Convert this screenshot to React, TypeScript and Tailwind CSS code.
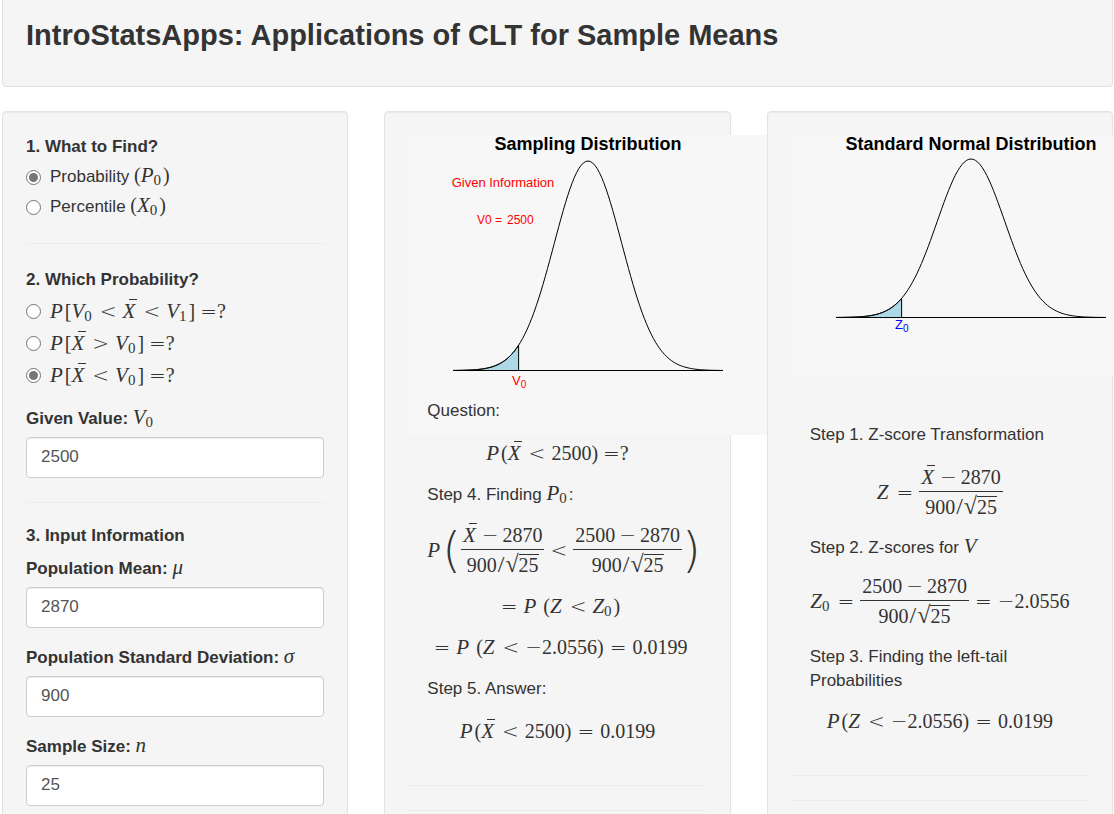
import { useState, type ReactNode } from "react";

/* ---------- Math typesetting helpers ---------- */

function M({ children }: { children: ReactNode }) {
  return (
    <span className="whitespace-nowrap font-['Liberation_Serif',serif] text-[20px] font-normal leading-7">
      {children}
    </span>
  );
}

/* Math inside a line of ordinary text; keeps the line's own height. */
function Inline({ children }: { children: ReactNode }) {
  return (
    <span className="whitespace-nowrap font-['Liberation_Serif',serif] text-[20px] font-normal leading-none">
      {children}
    </span>
  );
}

function V({ name, sub, bar }: { name: string; sub?: string; bar?: boolean }) {
  return (
    <>
      <span
        className={`relative inline-block text-[21px] italic leading-none ${sub ? "" : "mr-[2px]"}`}
      >
        {name}
        {bar && <span className="absolute left-[6px] top-[-2px] w-2 border-t border-[#333]" />}
      </span>
      {sub && <sub className="bottom-[-3px] mr-[2px] text-[15px] leading-none">{sub}</sub>}
    </>
  );
}

function Sign({ children }: { children: ReactNode }) {
  return (
    <span className="font-['DejaVu_Sans',sans-serif] text-[20px] font-extralight leading-none">
      {children}
    </span>
  );
}

function Op({ children }: { children: ReactNode }) {
  return (
    <span className="mx-[6px]">
      <Sign>{children}</Sign>
    </span>
  );
}

function Minus() {
  return (
    <span className="mx-1">
      <Sign>−</Sign>
    </span>
  );
}

function Equation({ children }: { children: ReactNode }) {
  return <div className="flex items-center justify-center text-center">{children}</div>;
}

function Frac({ top, bottom }: { top: ReactNode; bottom: ReactNode }) {
  return (
    <span className="inline-flex flex-col items-center">
      <span className="px-[2px]">
        <M>{top}</M>
      </span>
      <span className="flex w-full justify-center border-t border-[#333] pt-px">
        <M>{bottom}</M>
      </span>
    </span>
  );
}

function StandardError({ sd, n }: { sd: string; n: string }) {
  return (
    <>
      {sd}
      <span className="mx-px text-[24px] leading-none">/</span>
      <span className="text-[24px] leading-none">√</span>
      <span className="inline-block border-t border-[#333] leading-[21px]">{n}</span>
    </>
  );
}

function Paren({ children }: { children: ReactNode }) {
  return (
    <span className="font-['DejaVu_Sans',sans-serif] text-[48px] font-extralight leading-[52px]">
      {children}
    </span>
  );
}

/* ---------- Plots ---------- */

const CENTER = 180;
const SD = 33.75;

function curve(base: number, peak: number, from: number, to: number) {
  const pts: string[] = [];
  const steps = 120;
  for (let i = 0; i <= steps; i++) {
    const z = from + ((to - from) * i) / steps;
    const y = base - (base - peak) * Math.exp((-z * z) / 2);
    pts.push(`${(CENTER + z * SD).toFixed(2)},${y.toFixed(2)}`);
  }
  return pts.join(" ");
}

function BellPlot({
  title,
  height,
  base,
  peak,
  z,
  children,
}: {
  title: string;
  height: number;
  base: number;
  peak: number;
  z: number;
  children: ReactNode;
}) {
  const cut = CENTER + z * SD;
  return (
    <svg
      width="360"
      height={height}
      viewBox={`0 0 360 ${height}`}
      role="img"
      aria-label={title}
      className="block max-w-none bg-[#f7f7f7] font-['Liberation_Sans',sans-serif]"
    >
      <text x="180" y="15" textAnchor="middle" fontSize="18" fontWeight="bold" fill="#000">
        {title}
      </text>
      <polygon
        points={`45,${base} ${curve(base, peak, -4, z)} ${cut},${base}`}
        fill="#add8e6"
        stroke="#000"
      />
      <polyline points={curve(base, peak, -4, 4)} fill="none" stroke="#000" />
      <line x1="45" x2="315" y1={base} y2={base} stroke="#000" />
      {children}
    </svg>
  );
}

/* ---------- Layout pieces ---------- */

function Panel({ children }: { children: ReactNode }) {
  return (
    <section className="relative min-w-0 rounded border border-[#e3e3e3] bg-[#f5f5f5] p-[23px] shadow-[inset_0_1px_1px_rgba(0,0,0,0.05)]">
      {children}
    </section>
  );
}

function Rule({ className }: { className: string }) {
  return <hr className={`border-[#ececec] ${className}`} />;
}

function Radio({
  group,
  id,
  checked,
  onSelect,
  rowClass,
  children,
}: {
  group: string;
  id: string;
  checked: boolean;
  onSelect: () => void;
  rowClass: string;
  children: ReactNode;
}) {
  return (
    <label htmlFor={id} className={`flex items-center ${rowClass}`}>
      <input
        type="radio"
        id={id}
        name={group}
        checked={checked}
        onChange={onSelect}
        className="mr-[9px] grid size-[15px] shrink-0 appearance-none place-content-center rounded-full border border-[#767676] bg-white before:size-[9px] before:rounded-full checked:before:bg-[#767676]"
      />
      <span>{children}</span>
    </label>
  );
}

function Field({
  id,
  label,
  symbol,
  initial,
  className,
}: {
  id: string;
  label: string;
  symbol: ReactNode;
  initial: string;
  className: string;
}) {
  const [value, setValue] = useState(initial);
  return (
    <div className={className}>
      <label htmlFor={id} className="mb-[7px] block h-6 font-bold leading-[26px]">
        {label} <Inline>{symbol}</Inline>
      </label>
      <input
        id={id}
        type="text"
        inputMode="decimal"
        value={value}
        onChange={(e) => setValue(e.target.value)}
        className="block h-[41px] w-full rounded border border-[#ccc] bg-white px-[14px] pb-[2px] text-[17px] text-[#555] shadow-[inset_0_1px_1px_rgba(0,0,0,0.075)]"
      />
    </div>
  );
}

export default function App() {
  const [find, setFind] = useState("probability");
  const [which, setWhich] = useState("left");

  return (
    <div className="overflow-x-clip bg-white pl-[2px] pr-px font-['Liberation_Sans',Arial,sans-serif] text-[17px] leading-6 text-[#333]">
      <header className="rounded-b border border-t-0 border-[#e3e3e3] bg-[#f5f5f5] px-[23px] pb-[33px] pt-[17px]">
        <h1 className="text-[29px] font-bold leading-9">
          IntroStatsApps: Applications of CLT for Sample Means
        </h1>
      </header>

      <main className="mt-6 grid grid-cols-3 gap-9">
        <Panel>
          <fieldset>
            <legend className="font-bold">1. What to Find?</legend>
            <div className="pt-[3px]">
              <Radio
                group="find"
                id="find-probability"
                rowClass="h-[30px]"
                checked={find === "probability"}
                onSelect={() => setFind("probability")}
              >
                Probability <Inline>(<V name="P" sub="0" />)</Inline>
              </Radio>
              <Radio
                group="find"
                id="find-percentile"
                rowClass="h-[30px]"
                checked={find === "percentile"}
                onSelect={() => setFind("percentile")}
              >
                Percentile <Inline>(<V name="X" sub="0" />)</Inline>
              </Radio>
            </div>
          </fieldset>

          <Rule className="mt-[21px]" />

          <fieldset className="mt-6">
            <legend className="font-bold">2. Which Probability?</legend>
            <div className="pt-[3px]">
              <Radio
                group="which"
                id="which-between"
                rowClass="h-8"
                checked={which === "between"}
                onSelect={() => setWhich("between")}
              >
                <M>
                  <V name="P" />[<V name="V" sub="0" />
                  <Op>&lt;</Op>
                  <V name="X" bar />
                  <Op>&lt;</Op>
                  <V name="V" sub="1" />] <Sign>=</Sign>?
                </M>
              </Radio>
              <Radio
                group="which"
                id="which-right"
                rowClass="h-8"
                checked={which === "right"}
                onSelect={() => setWhich("right")}
              >
                <M>
                  <V name="P" />[<V name="X" bar />
                  <Op>&gt;</Op>
                  <V name="V" sub="0" />] <Sign>=</Sign>?
                </M>
              </Radio>
              <Radio
                group="which"
                id="which-left"
                rowClass="h-8"
                checked={which === "left"}
                onSelect={() => setWhich("left")}
              >
                <M>
                  <V name="P" />[<V name="X" bar />
                  <Op>&lt;</Op>
                  <V name="V" sub="0" />] <Sign>=</Sign>?
                </M>
              </Radio>
            </div>
          </fieldset>

          <Field
            id="given"
            label="Given Value:"
            symbol={<V name="V" sub="0" />}
            initial="2500"
            className="mt-[15px]"
          />

          <Rule className="mt-6" />

          <h2 className="mt-[21px] font-bold">3. Input Information</h2>
          <Field
            id="mean"
            label="Population Mean:"
            symbol={<V name="μ" />}
            initial="2870"
            className="mt-2"
          />
          <Field
            id="sd"
            label="Population Standard Deviation:"
            symbol={<V name="σ" />}
            initial="900"
            className="mt-[17px]"
          />
          <Field
            id="size"
            label="Sample Size:"
            symbol={<V name="n" />}
            initial="25"
            className="mt-[17px]"
          />
        </Panel>

        <Panel>
          <div className="h-[264px]">
            <BellPlot title="Sampling Distribution" height={300} base={235.5} peak={26} z={-2.0556}>
              <g fill="#f00">
                <text x="95" y="52" textAnchor="middle" fontSize="13">
                  Given Information
                </text>
                <text x="69" y="89" fontSize="12">
                  V0 =
                </text>
                <text x="99" y="89" fontSize="12">
                  2500
                </text>
                <text x="104" y="250" fontSize="13">
                  V
                  <tspan dy="3" fontSize="10">
                    0
                  </tspan>
                </text>
              </g>
            </BellPlot>
          </div>
          <div className="relative px-[19px]">
            <p className="mb-4">Question:</p>
            <Equation>
              <M>
                <V name="P" />(<V name="X" bar />
                <Op>&lt;</Op>2500) <Sign>=</Sign>?
              </M>
            </Equation>
            <p className="mb-[14px] mt-4 h-6">
              Step 4. Finding <Inline><V name="P" sub="0" /></Inline>:
            </p>
            <div className="flex h-[58px] items-center">
              <M>
                <V name="P" />
              </M>
              <Paren>(</Paren>
              <Frac
                top={<><V name="X" bar /><Minus />2870</>}
                bottom={<StandardError sd="900" n="25" />}
              />
              <M>
                <Op>&lt;</Op>
              </M>
              <Frac top={<>2500<Minus />2870</>} bottom={<StandardError sd="900" n="25" />} />
              <Paren>)</Paren>
            </div>
            <div className="mt-[13px] flex flex-col gap-[13px]">
              <Equation>
                <M>
                  <Op>=</Op>
                  <V name="P" /> (<V name="Z" />
                  <Op>&lt;</Op>
                  <V name="Z" sub="0" />)
                </M>
              </Equation>
              <Equation>
                <M>
                  <Op>=</Op>
                  <V name="P" /> (<V name="Z" />
                  <Op>&lt;</Op>
                  <Sign>−</Sign>2.0556)<Op>=</Op>0.0199
                </M>
              </Equation>
            </div>
            <p className="mb-4 mt-4">Step 5. Answer:</p>
            <Equation>
              <M>
                <V name="P" />(<V name="X" bar />
                <Op>&lt;</Op>2500)<Op>=</Op>0.0199
              </M>
            </Equation>
          </div>
          <Rule className="mt-10" />
          <Rule className="mt-6" />
        </Panel>

        <Panel>
          <BellPlot
            title="Standard Normal Distribution"
            height={240}
            base={182.5}
            peak={24}
            z={-2.0556}
          >
            <text x="104" y="194" fontSize="13" fill="#00f">
              Z
              <tspan dy="3" fontSize="10">
                0
              </tspan>
            </text>
          </BellPlot>
          <div className="mt-12 px-[19px]">
            <p className="mb-4">Step 1. Z-score Transformation</p>
            <Equation>
              <M>
                <V name="Z" />
                <Op>=</Op>
              </M>
              <Frac
                top={<><V name="X" bar /><Minus />2870</>}
                bottom={<StandardError sd="900" n="25" />}
              />
            </Equation>
            <p className="mb-3 mt-[15px] h-6">
              Step 2. Z-scores for <Inline><V name="V" /></Inline>
            </p>
            <Equation>
              <M>
                <V name="Z" sub="0" />
                <Op>=</Op>
              </M>
              <Frac top={<>2500<Minus />2870</>} bottom={<StandardError sd="900" n="25" />} />
              <M>
                <Op>=</Op>
                <Sign>−</Sign>2.0556
              </M>
            </Equation>
            <p className="mb-[14px] mt-[15px]">Step 3. Finding the left-tail Probabilities</p>
            <Equation>
              <M>
                <V name="P" />(<V name="Z" />
                <Op>&lt;</Op>
                <Sign>−</Sign>2.0556)<Op>=</Op>0.0199
              </M>
            </Equation>
          </div>
          <Rule className="mt-10" />
          <Rule className="mt-6" />
        </Panel>
      </main>
    </div>
  );
}
